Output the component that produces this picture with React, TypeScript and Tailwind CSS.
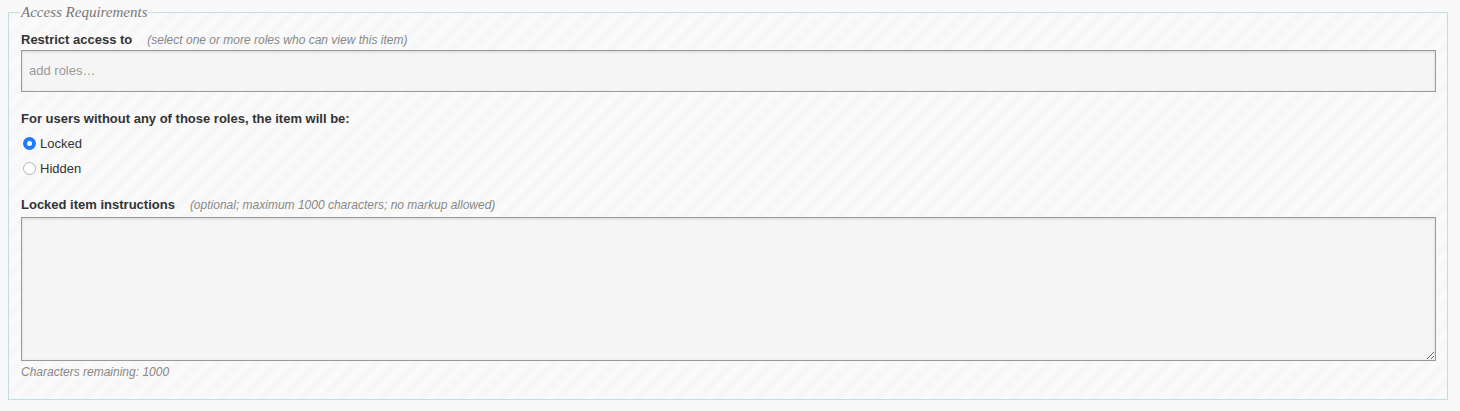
import React from "react";

const sans = "font-['Helvetica_Neue','Liberation_Sans',Arial,sans-serif]";

const Radio = ({ checked, label }: { checked?: boolean; label: string }) => (
  <label className="flex items-center h-[25px] gap-[4px] text-[13px] text-[#333]">
    {checked ? (
      <span className="ml-[2px] w-[13px] h-[13px] rounded-full bg-[#1f7bf6] flex items-center justify-center">
        <span className="w-[5px] h-[5px] rounded-full bg-white" />
      </span>
    ) : (
      <span className="ml-[2px] w-[13px] h-[13px] rounded-full border border-[#b5b5b5] bg-white" />
    )}
    <span>{label}</span>
  </label>
);

export default function App() {
  return (
    <div className={`min-h-[411px] bg-[#f9f9f9] pt-[2px] pl-2 pr-3 ${sans}`}>
      <fieldset className="border border-[#bfdfe3] pl-[12px] pr-[11px] pb-[19px] bg-[repeating-linear-gradient(135deg,#f7f7f7_0px,#f7f7f7_7px,#fafafa_7px,#fafafa_14px)]">
        <legend className="px-[1px] ml-[-1px] font-['Georgia','Liberation_Serif',serif] italic text-[15px] leading-[20px] text-[#777]">
          Access Requirements
        </legend>

        {/* roles */}
        <div className="mt-[9px] h-[18px] flex items-center">
          <span className="text-[13px] font-bold text-[#333]">Restrict access to</span>
          <span className="ml-[15px] text-[12px] italic text-[#888]">
            (select one or more roles who can view this item)
          </span>
        </div>
        <div className="mt-[1px] h-[42px] border border-[#999] bg-[#f5f5f5] shadow-[inset_0_1px_3px_rgba(0,0,0,0.12)] flex items-center px-[7px]">
          <span className="text-[13px] text-[#999]">add roles…</span>
        </div>

        {/* visibility */}
        <div className="mt-[18px] h-[18px] flex items-center text-[13px] font-bold text-[#333]">
          For users without any of those roles, the item will be:
        </div>
        <div className="mt-[3px] flex flex-col">
          <Radio checked label="Locked" />
          <Radio label="Hidden" />
        </div>

        {/* instructions */}
        <div className="mt-[15px] h-[18px] flex items-center">
          <span className="text-[13px] font-bold text-[#333]">Locked item instructions</span>
          <span className="ml-[15px] text-[12px] italic text-[#888]">
            (optional; maximum 1000 characters; no markup allowed)
          </span>
        </div>
        <textarea
          className="block mt-[3px] w-full h-[144px] border border-[#999] bg-[#f5f5f5] shadow-[inset_0_1px_3px_rgba(0,0,0,0.12)] outline-none"
          defaultValue=""
        />
        <div className="mt-[3px] h-[16px] flex items-center text-[12px] italic text-[#888]">
          Characters remaining: 1000
        </div>
      </fieldset>
    </div>
  );
}
